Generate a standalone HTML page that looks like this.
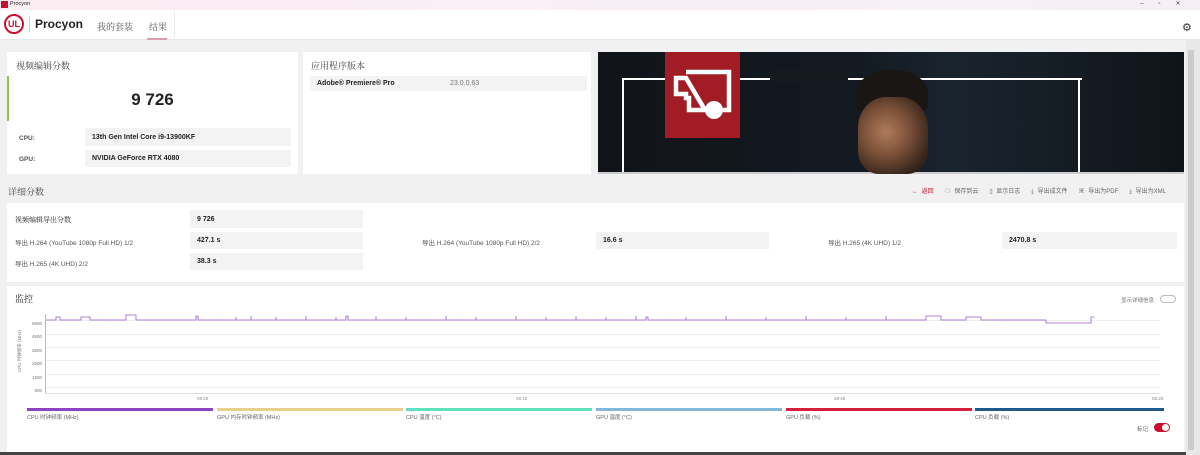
<!DOCTYPE html><html><head><meta charset="utf-8"><style>
*{margin:0;padding:0;box-sizing:border-box}
body{width:1200px;height:455px;background:#f1f1f1;font-family:"Liberation Sans","Noto Sans CJK SC",sans-serif;position:relative;overflow:hidden;color:#222}
.abs{position:absolute}
.card{position:absolute;background:#fff}
.f{font-family:"Noto Serif CJK SC","Liberation Serif",serif}
.box{position:absolute;background:#f3f3f3;font-size:7px;font-weight:bold;padding-left:7px;display:flex;align-items:center}
.lbl{position:absolute;font-size:6.5px;color:#555}
.gl{position:absolute;left:46px;width:1114px;height:1px;background:#eee}
.lg{position:absolute;top:408px;height:3px}
.lt{position:absolute;top:413px;font-size:5.5px;color:#666}
</style></head><body>
<div class="abs" style="left:0;top:0;width:1200px;height:10px;background:linear-gradient(90deg,#fbeef3,#f6f0f6)"></div>
<div class="abs" style="left:1px;top:1px;width:7px;height:7px;background:#c8102e"></div>
<div class="abs" style="left:10px;top:1px;font-size:5.5px">Procyon</div>
<div class="abs" style="left:1140px;top:0;font-size:6px;color:#444;letter-spacing:15px">–▫✕</div>
<div class="abs" style="left:0;top:10px;width:1200px;height:30px;background:#fff;border-bottom:1px solid #e6e6e6"></div>
<div class="abs" style="left:4px;top:14px;width:20px;height:20px;border:2px solid #c8102e;border-radius:50%;color:#c8102e;font-size:9px;font-weight:bold;text-align:center;line-height:16px">UL</div>
<div class="abs" style="left:29px;top:16px;width:1px;height:16px;background:#ccc"></div>
<div class="abs" style="left:35px;top:17px;font-size:12px;font-weight:bold">Procyon</div>
<div class="abs f" style="left:97px;top:20px;font-size:9px;color:#555">我的套装</div>
<div class="abs f" style="left:149px;top:20px;font-size:9px;color:#555">结果</div>
<div class="abs" style="left:147px;top:38px;width:20px;height:2px;background:#d9a0ac"></div>
<div class="abs" style="left:174px;top:10px;width:1px;height:30px;background:#eee"></div>
<div class="abs" style="left:1182px;top:21px;font-size:11px;color:#333">⚙</div>
<div class="abs" style="left:1186px;top:40px;width:14px;height:415px;background:#e8e8e8"></div>
<div class="abs" style="left:1188px;top:50px;width:6px;height:400px;background:#ccc"></div>

<div class="card" style="left:7px;top:52px;width:291px;height:122px">
<div class="abs f" style="left:9px;top:7px;font-size:9px;color:#444">视频编辑分数</div>
<div class="abs" style="left:0;top:24px;width:2px;height:45px;background:#8cc34a"></div>
<div class="abs" style="left:0;top:38px;width:291px;text-align:center;font-size:17px;font-weight:bold">9 726</div>
<div class="lbl" style="left:12px;top:83px;font-weight:bold">CPU:</div>
<div class="box" style="left:78px;top:76px;width:206px;height:18px">13th Gen Intel Core i9-13900KF</div>
<div class="lbl" style="left:12px;top:104px;font-weight:bold">GPU:</div>
<div class="box" style="left:78px;top:98px;width:206px;height:17px">NVIDIA GeForce RTX 4080</div>
</div>
<div class="card" style="left:303px;top:52px;width:288px;height:122px">
<div class="abs f" style="left:8px;top:7px;font-size:9px;color:#444">应用程序版本</div>
<div class="box" style="left:7px;top:24px;width:277px;height:15px">Adobe® Premiere® Pro<span style="position:absolute;left:140px;font-weight:normal;color:#777">23.0.0.63</span></div>
</div>
<div class="abs" style="left:598px;top:52px;width:586px;height:122px;background:linear-gradient(90deg,#111419 0%,#131a22 45%,#1a242e 60%,#0f1419 100%);overflow:hidden">
<div class="abs" style="left:24px;top:26px;width:2px;height:96px;background:#fff"></div>
<div class="abs" style="left:24px;top:26px;width:460px;height:2px;background:#fff"></div>
<div class="abs" style="left:480px;top:26px;width:2px;height:96px;background:#fff"></div>
<div class="abs" style="left:0;top:120px;width:586px;height:2px;background:#ccc"></div>
<div class="abs" style="left:258px;top:18px;width:72px;height:44px;border-radius:50% 50% 20% 20%;background:#1a1614"></div>
<div class="abs" style="left:172px;top:18px;width:78px;height:12px;background:#141a20"></div>
<div class="abs" style="left:260px;top:45px;width:70px;height:77px;border-radius:40% 40% 30% 30%;background:radial-gradient(ellipse at 40% 45%,#b07b5c 0%,#7a5038 40%,#3a261c 75%,#1a1412 100%)"></div>
<div class="abs" style="left:67px;top:0;width:75px;height:86px;background:#a21c26">
<svg width="75" height="86" viewBox="0 0 75 86"><path d="M21 20H64V58H58M40 58H24V46H21V42H11V26H21Z" fill="none" stroke="#fff" stroke-width="4.5" stroke-linejoin="miter"/><circle cx="49" cy="58" r="9" fill="#fff"/></svg></div>
</div>

<div class="abs f" style="left:8px;top:185px;font-size:9px;color:#444">详细分数</div>
<div class="abs" style="left:912px;top:186px;font-size:6px;color:#666;word-spacing:2px"><span style="color:#c8102e">← 返回</span> &nbsp; ☁ 保存到云 &nbsp; ▯ 显示日志 &nbsp; ⤓ 导出成文件 &nbsp; ▣ 导出为PDF &nbsp; ⤓ 导出为XML</div>
<div class="card" style="left:7px;top:203px;width:1177px;height:79px">
<div class="abs f" style="left:8px;top:12px;font-size:7px">视频编辑导出分数</div>
<div class="box" style="left:183px;top:7px;width:173px;height:18px">9 726</div>
<div class="lbl" style="left:8px;top:34px">导出 H.264 (YouTube 1080p Full HD) 1/2</div>
<div class="box" style="left:183px;top:29px;width:173px;height:17px">427.1 s</div>
<div class="lbl" style="left:415px;top:34px">导出 H.264 (YouTube 1080p Full HD) 2/2</div>
<div class="box" style="left:589px;top:29px;width:173px;height:17px">16.6 s</div>
<div class="lbl" style="left:821px;top:34px">导出 H.265 (4K UHD) 1/2</div>
<div class="box" style="left:995px;top:29px;width:175px;height:17px">2470.8 s</div>
<div class="lbl" style="left:8px;top:55px">导出 H.265 (4K UHD) 2/2</div>
<div class="box" style="left:183px;top:50px;width:173px;height:17px">38.3 s</div>
</div>

<div class="card" style="left:7px;top:286px;width:1177px;height:166px"></div>
<div class="abs" style="left:0;top:452px;width:1186px;height:3px;background:#444"></div>
<div class="abs f" style="left:15px;top:292px;font-size:9px">监控</div>
<div class="abs" style="left:1121px;top:296px;font-size:5.5px;color:#777">显示详细信息</div>
<div class="abs" style="left:1160px;top:295px;width:16px;height:8px;border:1px solid #bbb;border-radius:4px"></div>
<div class="gl" style="top:320px"></div><div class="gl" style="top:334px"></div><div class="gl" style="top:347px"></div><div class="gl" style="top:360px"></div><div class="gl" style="top:374px"></div><div class="gl" style="top:387px"></div>
<div class="abs" style="left:45px;top:314px;width:1px;height:80px;background:#bbb"></div>
<div class="abs" style="left:45px;top:393px;width:1115px;height:1px;background:#ddd"></div>
<div class="abs" style="left:30px;top:317px;font-size:4.5px;color:#777;line-height:13.4px;text-align:right;width:12px">5500<br>4500<br>3500<br>2500<br>1500<br>500</div>
<div class="abs" style="left:17px;top:372px;font-size:4.5px;color:#777;transform:rotate(-90deg);transform-origin:0 0;white-space:nowrap">CPU 时钟频率 (MHz)</div>
<svg class="abs" style="left:46px;top:312px" width="1114" height="14"><path d="M0 8H10V5H14V8H35V5H44V8H80V3H90V8H150V4H152V8H300V4H302V8H600V5H602V8H880V4H895V8H920V5H935V8H1000V11H1045V5H1048" fill="none" stroke="#9b59d0" stroke-width="0.8"/><path d="M190 8V5M205 8V4M230 8V5M260 8V4M290 8V5M330 8V4M360 8V5M400 8V4M430 8V5M470 8V4M500 8V5M530 8V4M560 8V5M590 8V4M640 8V5M680 8V4M720 8V5M760 8V4M800 8V5M840 8V4" stroke="#9b59d0" stroke-width="0.8"/></svg>
<div class="abs" style="left:197px;top:396px;font-size:4.5px;color:#888">09:20</div>
<div class="abs" style="left:516px;top:396px;font-size:4.5px;color:#888">29:10</div>
<div class="abs" style="left:834px;top:396px;font-size:4.5px;color:#888">48:40</div>
<div class="abs" style="left:1152px;top:396px;font-size:4.5px;color:#888">58:20</div>
<div class="lg" style="left:27px;width:186px;background:#8e44c4"></div><div class="lt" style="left:27px">CPU 时钟频率 (MHz)</div>
<div class="lg" style="left:217px;width:186px;background:#e8cf8a"></div><div class="lt" style="left:217px">GPU 内存时钟频率 (MHz)</div>
<div class="lg" style="left:406px;width:186px;background:#5fe0c0"></div><div class="lt" style="left:406px">CPU 温度 (°C)</div>
<div class="lg" style="left:596px;width:186px;background:#7fb8d8"></div><div class="lt" style="left:596px">GPU 温度 (°C)</div>
<div class="lg" style="left:786px;width:186px;background:#d61f3a"></div><div class="lt" style="left:786px">GPU 负载 (%)</div>
<div class="lg" style="left:975px;width:189px;background:#1e5a8c"></div><div class="lt" style="left:975px">CPU 负载 (%)</div>
<div class="abs" style="left:1137px;top:425px;font-size:5.5px;color:#666">标记</div>
<div class="abs" style="left:1154px;top:423px;width:16px;height:9px;background:#c8102e;border-radius:5px"><div style="position:absolute;right:1px;top:1px;width:7px;height:7px;background:#fff;border-radius:50%"></div></div>
</body></html>
